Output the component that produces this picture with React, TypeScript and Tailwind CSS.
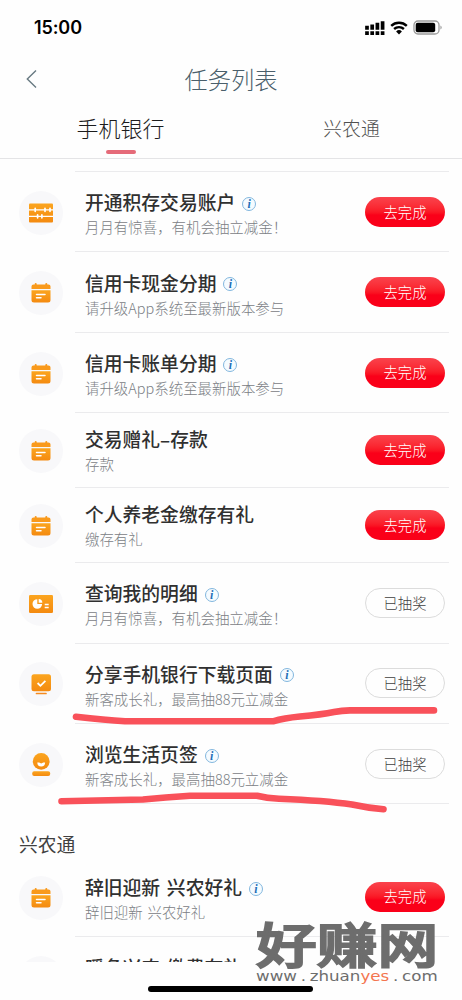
import { ReactNode } from 'react';

type IconKind = 'abacus' | 'calendar' | 'report' | 'check' | 'smile';

interface Task {
  icon: IconKind;
  title: string;
  desc: string;
  info?: boolean;
  done?: boolean;
}

const bankTasks: Task[] = [
  { icon: 'abacus', title: '开通积存交易账户', desc: '月月有惊喜，有机会抽立减金！', info: true },
  { icon: 'calendar', title: '信用卡现金分期', desc: '请升级App系统至最新版本参与', info: true },
  { icon: 'calendar', title: '信用卡账单分期', desc: '请升级App系统至最新版本参与', info: true },
  { icon: 'calendar', title: '交易赠礼–存款', desc: '存款' },
  { icon: 'calendar', title: '个人养老金缴存有礼', desc: '缴存有礼' },
  { icon: 'report', title: '查询我的明细', desc: '月月有惊喜，有机会抽立减金！', info: true, done: true },
  { icon: 'check', title: '分享手机银行下载页面', desc: '新客成长礼，最高抽88元立减金', info: true, done: true },
  { icon: 'smile', title: '浏览生活页签', desc: '新客成长礼，最高抽88元立减金', info: true, done: true },
];

const farmTasks: Task[] = [
  { icon: 'calendar', title: '辞旧迎新 兴农好礼', desc: '辞旧迎新 兴农好礼', info: true },
  { icon: 'calendar', title: '暖冬兴农 缴费有礼', desc: '', info: true },
];

const shapes: Record<IconKind, ReactNode> = {
  abacus: (
    <>
      <rect x="0" y="2.5" width="24" height="19" rx="1" fill="url(#orange)" />
      <path d="M0 8.8h24M0 15.3h24" stroke="#fff" strokeWidth="1.2" />
      <path d="M6.2 7.3v3M16 7.3v3M21 7.3v3M8.6 13.8v3M12.9 13.8v3" stroke="#fff" strokeWidth="1.7" strokeLinecap="round" />
    </>
  ),
  calendar: (
    <>
      <path d="M4.5 3.5h1.2V3a1 1 0 0 1 2 0v.5h8.6V3a1 1 0 0 1 2 0v.5h1.2a2 2 0 0 1 2 2V8h-19V5.5a2 2 0 0 1 2-2Z" fill="#f99a1c" />
      <path d="M2.5 9.2h19V19a2.5 2.5 0 0 1-2.5 2.5H5A2.5 2.5 0 0 1 2.5 19Z" fill="url(#orange)" />
      <path d="M7.5 13.5h8.5M7.5 16.7h4.5" stroke="#fff" strokeWidth="1.5" strokeLinecap="round" />
    </>
  ),
  report: (
    <>
      <rect x="0" y="3" width="24" height="18" rx="1.2" fill="url(#orange)" />
      <path d="M8.3 12V7.2a4.8 4.8 0 1 0 4.8 4.8Z" fill="#fff" />
      <path d="M9.7 10.7V6.9a4 4 0 0 1 3.7 3.8Z" fill="#fff" />
      <path d="M15.7 12.5h4M15.7 15.5h4" stroke="#fff" strokeWidth="1.3" />
    </>
  ),
  check: (
    <>
      <rect x="2.5" y="2.3" width="19.5" height="17" rx="2.5" fill="url(#orange)" />
      <path d="m8.6 11 2.8 2.8 5-5" stroke="#fff" strokeWidth="1.8" fill="none" />
      <path d="M7.5 21.5h9.5" stroke="#f58a1f" strokeWidth="1.7" strokeLinecap="round" />
    </>
  ),
  smile: (
    <>
      <circle cx="12.2" cy="8.4" r="8.4" fill="url(#orange)" />
      <path d="M8.3 9.6h1.8l2.1 1 2.1-1h1.8a3.9 3.9 0 0 1-7.8 0Z" fill="#fff" />
      <rect x="3.2" y="18.2" width="18" height="4.8" rx="2" fill="url(#orange)" />
    </>
  ),
};

function TaskIcon({ kind }: { kind: IconKind }) {
  return (
    <div className="ml-[18.5px] flex h-11 w-11 shrink-0 items-center justify-center rounded-full bg-[#f8f8fa]">
      <svg width="24" height="24" viewBox="0 0 24 24">
        <defs>
          <linearGradient id="orange" x1="0" y1="0" x2="0" y2="1">
            <stop offset="0" stopColor="#fba51f" />
            <stop offset="1" stopColor="#f48a10" />
          </linearGradient>
        </defs>
        {shapes[kind]}
      </svg>
    </div>
  );
}

function InfoBadge() {
  return (
    <span className="mt-[3px] ml-[7px] flex h-3.5 w-3.5 items-center justify-center rounded-full border border-[#82b7de] bg-[#f5fbff] font-['Liberation_Serif',serif] text-[12px] leading-none font-bold text-[#1f6fb8] italic">
      i
    </span>
  );
}

function TaskRow({ task }: { task: Task }) {
  return (
    <div className={`flex shrink-0 ${task.info ? 'h-[80.4px]' : 'h-[75px]'}`}>
      <div className="flex h-full items-center pt-px">
        <TaskIcon kind={task.icon} />
      </div>
      <div className="mr-[13px] ml-[12.5px] flex flex-1 items-center border-b border-[#ebebed] pr-1">
        <div className={`ml-2.5 flex-1 whitespace-nowrap ${task.info ? 'pt-1' : ''}`}>
          <div className="flex h-[26px] items-center text-[18.8px] font-medium text-[#303030] [word-spacing:2.5px]">
            {task.title}
            {task.info && <InfoBadge />}
          </div>
          <div className="h-[23px] text-[14.45px] leading-[23.5px] font-light text-[#7b8085] [word-spacing:1.5px]">{task.desc}</div>
        </div>
        {task.done ? (
          <button className="h-[30px] w-20 rounded-full border border-[#dcdcdc] text-[14.3px] leading-none font-light text-[#404040]">已抽奖</button>
        ) : (
          <button className="h-[30px] w-20 rounded-full bg-linear-to-b from-[#fa424c] to-[#fa0019] to-60% text-[14.3px] leading-none font-light text-white">去完成</button>
        )}
      </div>
    </div>
  );
}

function StatusBar() {
  return (
    <div className="flex h-[55px] items-center justify-between pr-[19px] pl-[34px] text-black">
      <span className="font-[Inter,sans-serif] text-[18px] font-semibold tracking-[-0.1px]">15:00</span>
      <div className="flex items-center">
        <svg width="20" height="16" viewBox="0 0 20 16">
          <path d="M2 5.7v4M7.2 4.5v5.2M12.4 2.8v6.9M17.6 1.3v8.4" stroke="#000" strokeWidth="3.7" />
          <path d="M2 11.3v3.6M7.2 11.3v3.6M12.4 11.3v3.6M17.6 11.3v3.6" stroke="#000" strokeWidth="3.7" />
        </svg>
        <svg className="ml-[5px]" width="18" height="14" viewBox="0 0 18 14">
          <path d="M1.2 4.9a11.3 11.3 0 0 1 15.6 0M4.1 8a7.2 7.2 0 0 1 9.8 0" stroke="#000" strokeWidth="2.4" fill="none" />
          <path d="M9 13.4 6.1 10.5a4.2 4.2 0 0 1 5.8 0Z" />
        </svg>
        <svg className="ml-[5px]" width="30" height="15" viewBox="0 0 30 15">
          <rect x="1" y="1" width="25" height="13" rx="4" stroke="#9b9b9b" strokeWidth="1.3" fill="none" />
          <rect x="2.7" y="2.7" width="19.5" height="9.6" rx="2" />
          <path d="M27.5 5.5a2.4 2.4 0 0 1 0 4Z" fill="#8b8b8b" />
        </svg>
      </div>
    </div>
  );
}

export default function App() {
  return (
    <div className="relative flex h-[1000px] w-[462px] flex-col overflow-hidden bg-[#fefefe] font-['Noto_Sans_CJK_SC',sans-serif]">
      <StatusBar />

      <header className="flex h-12 items-center">
        <svg className="ml-[26px]" width="12" height="20" viewBox="0 0 12 20">
          <path d="M10 1.5 1.3 10 10 18.5" stroke="#687a82" strokeWidth="1.4" fill="none" />
        </svg>
        <h1 className="mr-[38px] flex-1 text-center text-[23.3px] font-light text-[#4a5f6b]">任务列表</h1>
      </header>

      <nav className="flex h-14 shrink-0 border-b border-[#e4e4e6]">
        <div className="flex w-[241px] flex-col items-center pt-[6px]">
          <span className="text-[22px] leading-9 font-light text-[#1c1c1c]">手机银行</span>
          <span className="mt-[5px] h-[3.5px] w-[30px] rounded-full bg-[#e56b79]" />
        </div>
        <div className="flex-1 pt-[7px] text-center text-[18.8px] leading-9 font-light text-[#505050]">兴农通</div>
      </nav>

      <main className="h-[803px] overflow-hidden">
        <div className="mr-[13px] ml-[75px] h-[13.1px] border-b border-[#ebebed]" />
        {bankTasks.map(t => <TaskRow key={t.title} task={t} />)}
        <h2 className="h-[52.5px] pt-[27px] pl-[19px] text-[18.8px] leading-[26px] text-[#404040]">兴农通</h2>
        {farmTasks.map(t => <TaskRow key={t.title} task={t} />)}
      </main>

      {/* red marker lines */}
      <svg className="pointer-events-none absolute inset-0" width="462" height="1000" fill="none" stroke="#f9515a" strokeWidth="6.6" strokeLinecap="round" strokeLinejoin="round">
        <path d="M76 716.7Q105 720 125 721.3H273Q284 718 300 716.5Q322 714.5 334 712Q342 710.4 350 710.4H434" />
        <path d="M61.5 801.3L143 799.5Q165 797.5 190 795.7H257Q267 798.2 279 798.7Q325 800.5 352 804.5Q368 808 383.5 809.3" />
      </svg>

      <div className="absolute bottom-2 left-[148px] h-1.5 w-[165px] rounded-full bg-black" />

      {/* site watermark */}
      <div className="absolute top-[918px] left-[256px] w-[184px] whitespace-nowrap text-[#6d6d6d]">
        <div className="h-[48px] origin-top scale-y-[0.78] text-[60.7px] leading-[64px] font-medium [-webkit-text-stroke:2.6px_#6d6d6d]">好赚网</div>
        <div className="flex w-[158px] origin-left scale-x-[1.15] justify-between font-['DejaVu_Sans',sans-serif] text-[14.5px] leading-[20px]">
          <span>www</span>
          <span>.</span>
          <span>zhuan<span className="text-[#f4754f]">yes</span></span>
          <span>.</span>
          <span>com</span>
        </div>
      </div>
    </div>
  );
}
